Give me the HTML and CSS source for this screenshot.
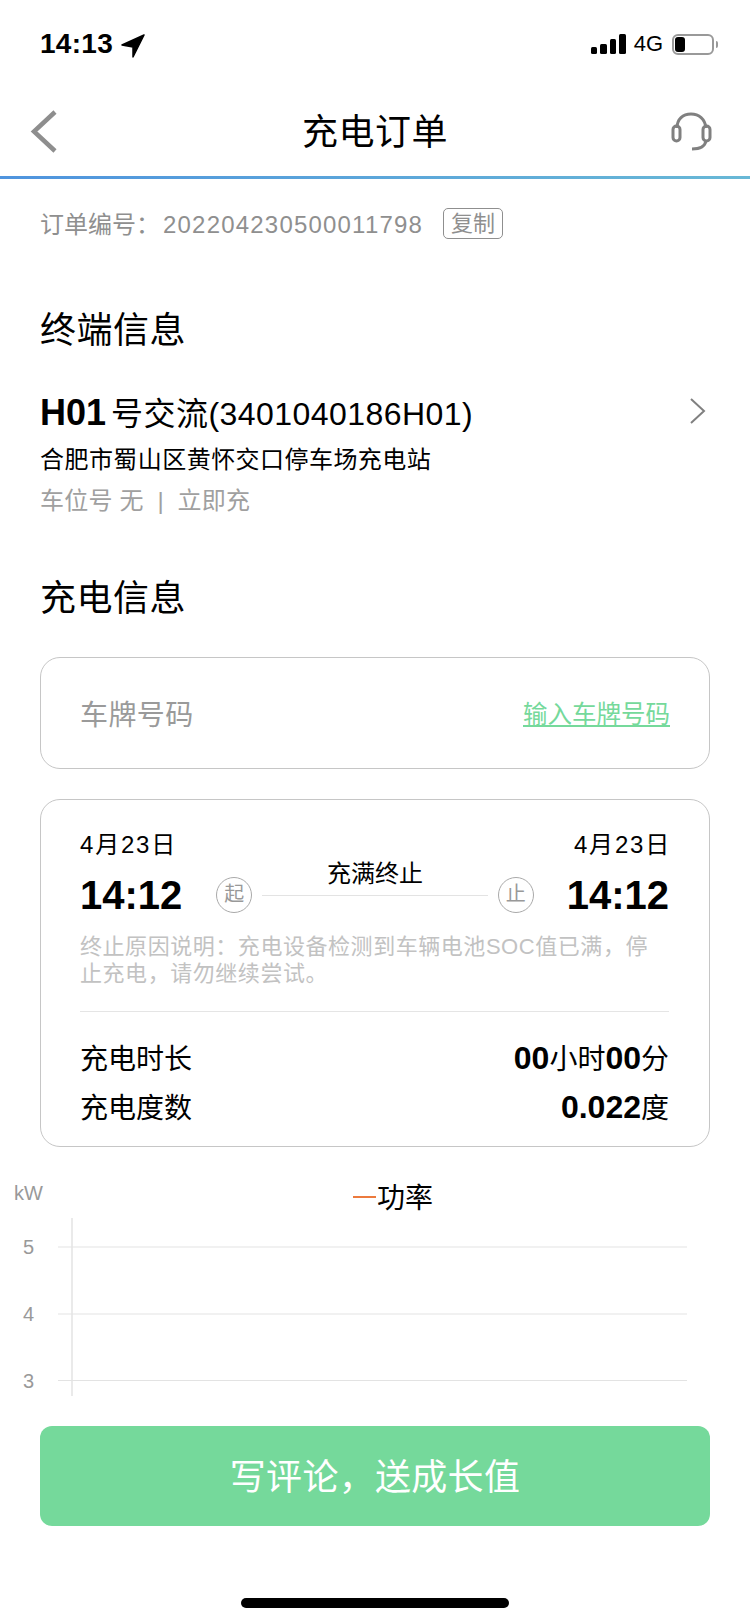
FILE: index.html
```html
<!DOCTYPE html>
<html lang="zh-CN">
<head>
    <meta charset="UTF-8">
    <meta name="viewport" content="width=device-width, initial-scale=1.0">
    <title>充电订单</title>
    <link rel="stylesheet" href="styles.css">
</head>
<body>
    <div class="status-bar">
        <div class="status-left">
            <span class="clock">14:13</span>
            <svg class="location" width="24" height="24" viewBox="0 0 24 24">
                <polygon points="23,1 1,11 12,13 12,23" fill="#000" stroke="#000" stroke-width="1.5" stroke-linejoin="round"/>
            </svg>
        </div>
        <div class="status-right">
            <div class="signal">
                <i class="bar-1"></i><i class="bar-2"></i><i class="bar-3"></i><i class="bar-4"></i>
            </div>
            <span class="network">4G</span>
            <div class="battery"><i class="battery-level"></i></div>
            <i class="battery-cap"></i>
        </div>
    </div>

    <div class="nav">
        <svg class="nav-back" width="30" height="46" viewBox="0 0 30 46">
            <polyline points="25,3 4,22.500 25,42" fill="none" stroke="#8e8e8e" stroke-width="4.500"/>
        </svg>
        <h1 class="nav-title">充电订单</h1>
        <svg class="nav-service" width="44" height="40" viewBox="0 0 44 40" fill="none" stroke="#808080" stroke-width="3">
            <path d="M7 16 C7 7 13 2 21 2 C29 2 35 7 36 16"/>
            <rect x="3" y="14" width="7" height="15" rx="3.500"/>
            <rect x="33" y="14" width="7" height="15" rx="3.500"/>
            <path d="M36 29 C35 34 30 37 22 37"/>
        </svg>
    </div>
    <div class="nav-line"></div>

    <div class="order-no">
        <span class="order-text">订单编号：<span class="order-digits">202204230500011798</span></span>
        <button class="copy-btn">复制</button>
    </div>

    <h2 class="section-title terminal-title">终端信息</h2>

    <div class="terminal-name">
        <div><b class="terminal-code">H01</b><span class="terminal-kind">号交流(3401040186H01)</span></div>
        <svg width="18" height="26" viewBox="0 0 18 26">
            <polyline points="2,1 15,13 2,25" fill="none" stroke="#808080" stroke-width="2"/>
        </svg>
    </div>
    <div class="station">合肥市蜀山区黄怀交口停车场充电站</div>
    <div class="station-meta">车位号 无 &nbsp;|&nbsp; 立即充</div>

    <h2 class="section-title charge-title">充电信息</h2>

    <div class="card plate-card">
        <span class="plate-label">车牌号码</span>
        <a class="plate-link">输入车牌号码</a>
    </div>

    <div class="card detail-card">
        <div class="date-row">
            <span>4月23日</span>
            <span>4月23日</span>
        </div>
        <div class="time-row">
            <span class="time">14:12</span>
            <div class="track">
                <span class="track-dot">起</span>
                <div class="track-line"><span class="track-label">充满终止</span></div>
                <span class="track-dot">止</span>
            </div>
            <span class="time">14:12</span>
        </div>
        <p class="reason">终止原因说明：充电设备检测到车辆电池SOC值已满，停止充电，请勿继续尝试。</p>
        <div class="stats">
            <div class="stat-row">
                <span>充电时长</span>
                <span><b>00</b>小时<b>00</b>分</span>
            </div>
            <div class="stat-row stat-row-last">
                <span>充电度数</span>
                <span><b>0.022</b>度</span>
            </div>
        </div>
    </div>

    <!-- power chart, only the top of the axis fits above the button -->
    <svg class="chart" width="750" height="279" viewBox="0 0 750 279">
        <text class="chart-tick" x="14" y="53">kW</text>
        <line x1="353" y1="50" x2="376" y2="50" stroke="#ec7a3d" stroke-width="2"/>
        <text class="chart-legend" x="377" y="61">功率</text>
        <line x1="72" y1="71" x2="72" y2="249" stroke="#e3e3e3" stroke-width="1.500"/>
        <line x1="58" y1="100" x2="687" y2="100" stroke="#e3e3e3" stroke-width="1.200"/>
        <line x1="58" y1="167" x2="687" y2="167" stroke="#e3e3e3" stroke-width="1.200"/>
        <line x1="58" y1="233.500" x2="687" y2="233.500" stroke="#e3e3e3" stroke-width="1.200"/>
        <text class="chart-tick" x="23" y="107">5</text>
        <text class="chart-tick" x="23" y="174">4</text>
        <text class="chart-tick" x="23" y="241">3</text>
    </svg>

    <button class="review-btn">写评论，送成长值</button>

    <div class="home-bar"></div>
</body>
</html>
```

FILE: styles.css
```css
* {
    box-sizing: border-box;
}
body {
    margin: 0;
    width: 750px;
    height: 1624px;
    overflow: hidden;
    background: #fff;
    color: #000;
    font-family: "Liberation Sans", "Noto Sans CJK SC", sans-serif;
}

/* status bar */
.status-bar {
    height: 88px;
    display: flex;
    align-items: center;
    justify-content: space-between;
    padding: 0 32px 0 40px;
}
.status-left {
    display: flex;
    align-items: center;
    gap: 8px;
}
.clock {
    font-size: 28px;
    font-weight: bold;
    letter-spacing: 0.3px;
}
.location {
    margin-top: 3px;
}
.status-right {
    display: flex;
    align-items: center;
}
.signal {
    display: flex;
    align-items: flex-end;
    gap: 3px;
    height: 20px;
}
.signal i {
    width: 6.500px;
    background: #000;
    border-radius: 1.5px;
}
.bar-1 { height: 7px; }
.bar-2 { height: 10px; }
.bar-3 { height: 15px; }
.bar-4 { height: 20px; }
.network {
    font-size: 22px;
    margin: 0 9px 0 8px;
}
.battery {
    width: 42px;
    height: 21px;
    border: 2px solid #999;
    border-radius: 6px;
    padding: 1px;
}
.battery-level {
    display: block;
    width: 10px;
    height: 15px;
    background: #000;
    border-radius: 3px;
}
.battery-cap {
    width: 2px;
    height: 7px;
    margin-left: 2px;
    background: #999;
    border-radius: 0 2px 2px 0;
}

/* nav */
.nav {
    height: 88px;
    display: grid;
    grid-template-columns: 1fr auto 1fr;
    align-items: center;
    padding: 0 36px;
}
.nav-back {
    margin-left: -6px;
}
.nav-service {
    justify-self: end;
}
.nav-title {
    margin: 0;
    padding-top: 2px;
    font-size: 36px;
    font-weight: normal;
    line-height: 50px;
    letter-spacing: 0.5px;
}
.nav-line {
    height: 3px;
    background: linear-gradient(to right, #4f94de, #68b8d6);
}

.order-no {
    display: flex;
    align-items: center;
    height: 31px;
    margin: 29px 0 0 40px;
    color: #8f8f8f;
    font-size: 24px;
}
.order-text {
    padding-bottom: 2px;
}
.order-digits {
    margin-left: 3px;
    letter-spacing: 1.2px;
}
.copy-btn {
    width: 60px;
    height: 31px;
    margin-left: 20px;
    padding: 0;
    background: #fff;
    border: 1px solid #8f8f8f;
    border-radius: 5px;
    color: #8f8f8f;
    font-family: inherit;
    font-size: 22px;
    line-height: 28px;
}

.section-title {
    margin: 0 0 0 40px;
    font-size: 36px;
    font-weight: normal;
    line-height: 50px;
    letter-spacing: 0.5px;
}
.terminal-title {
    margin-top: 67px;
}
.charge-title {
    margin-top: 53px;
}

.terminal-name {
    display: flex;
    align-items: center;
    justify-content: space-between;
    height: 44px;
    margin: 33px 43px 0 40px;
    font-size: 32px;
}
.terminal-code {
    font-size: 36px;
}
.terminal-kind {
    margin-left: 5px;
    letter-spacing: 0.45px;
}
.station {
    margin: 7px 0 0 40px;
    font-size: 24px;
    line-height: 40px;
    letter-spacing: 0.45px;
}
.station-meta {
    margin: 1px 0 0 40px;
    color: #a0a0a0;
    font-size: 24px;
    line-height: 40px;
    letter-spacing: 0.2px;
}

.card {
    margin: 0 40px;
    border: 1px solid #c6c6c6;
    border-radius: 20px;
}
.plate-card {
    display: flex;
    align-items: center;
    justify-content: space-between;
    height: 112px;
    margin-top: 33px;
    padding: 0 39px;
}
.plate-label {
    color: #9a9a9a;
    font-size: 28px;
    letter-spacing: 0.4px;
}
.plate-link {
    padding-bottom: 2px;
    color: #75d99b;
    font-size: 24.500px;
    text-decoration: underline;
}

.detail-card {
    height: 348px;
    margin-top: 30px;
    padding: 28px 40px 0 39px;
}
.date-row {
    display: flex;
    justify-content: space-between;
    margin-right: -2px;
    font-size: 24px;
    line-height: 34px;
    letter-spacing: 1.8px;
}
.time-row {
    display: flex;
    align-items: center;
    justify-content: space-between;
    height: 40px;
    margin-top: 13px;
}
.time {
    font-size: 40px;
    font-weight: bold;
    line-height: 40px;
}
.track {
    flex: 1;
    display: flex;
    align-items: center;
    margin: 0 33px 0 34px;
}
.track-dot {
    flex: none;
    width: 36px;
    height: 36px;
    border: 1px solid #aaa;
    border-radius: 50%;
    color: #999;
    font-size: 20px;
    line-height: 33px;
    text-align: center;
}
.track-line {
    flex: 1;
    position: relative;
    height: 1px;
    margin: 0 10px;
    background: #e3e3e3;
}
.track-label {
    position: absolute;
    left: 0;
    right: 0;
    bottom: 6px;
    font-size: 24px;
    line-height: 32px;
    text-align: center;
}
.reason {
    margin: 18px 0 0;
    color: #c2c2c2;
    font-size: 22px;
    line-height: 27px;
    letter-spacing: 0.55px;
}
.stats {
    margin-top: 24px;
    padding-top: 23px;
    border-top: 1px solid #e5e5e5;
}
.stat-row {
    display: flex;
    align-items: center;
    justify-content: space-between;
    height: 44px;
    font-size: 28px;
}
.stat-row b {
    font-size: 32px;
}
.stat-row-last {
    margin-top: 5px;
}

/* chart */
.chart {
    display: block;
}
.chart-tick {
    fill: #999;
    font-size: 20px;
}
.chart-legend {
    fill: #000;
    font-size: 28px;
}

.review-btn {
    display: block;
    width: 670px;
    height: 100px;
    margin-left: 40px;
    padding: 0 0 5px;
    background: #75d99b;
    border: none;
    border-radius: 12px;
    color: #fff;
    font-family: inherit;
    font-size: 36px;
    letter-spacing: 0.3px;
}

.home-bar {
    width: 268px;
    height: 10px;
    margin: 72px auto 0;
    background: #000;
    border-radius: 5px;
}
```
